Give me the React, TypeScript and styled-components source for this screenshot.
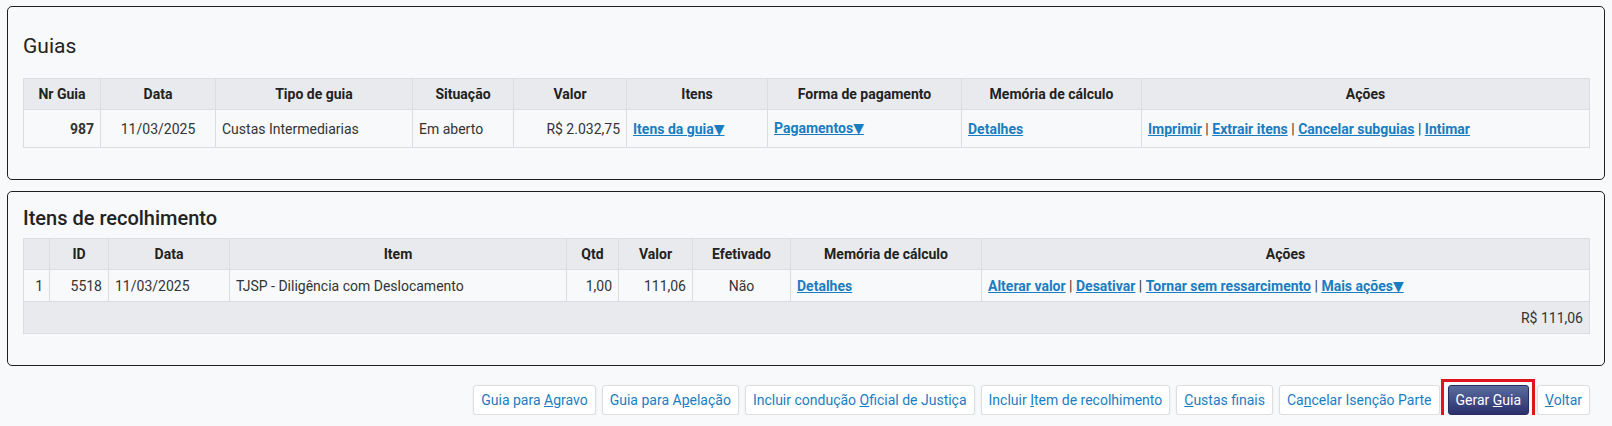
import React from "react";
import styled, { createGlobalStyle } from "styled-components";

const Global = createGlobalStyle`
  html, body { margin: 0; padding: 0; background: #f8f9fa; }
  body {
    font-family: Roboto, "Liberation Sans", sans-serif;
    font-size: 14px;
    color: #333;
  }
  * { box-sizing: border-box; }
`;

const Page = styled.div`
  display: flex;
  flex-direction: column;
  gap: 11px;
  padding: 6px 7px 0 7px;
`;

const Panel = styled.section`
  border: 1px solid #1f1f1f;
  border-radius: 5px;
  background: #f8f9fa;
  padding: 15px 15px 31px;
`;

const Title = styled.h2<{ $size: number; $weight: number; $mt: number; $mb: number }>`
  margin: ${(p) => p.$mt}px 0 ${(p) => p.$mb}px;
  font-size: ${(p) => p.$size}px;
  line-height: ${(p) => p.$size + 4}px;
  font-weight: ${(p) => p.$weight};
  color: #222;
`;

const Table = styled.table`
  width: 100%;
  border-collapse: collapse;
  table-layout: fixed;
  font-size: 14px;
`;

const Col = styled.col<{ $w: number }>`
  width: ${(p) => p.$w}px;
`;

const HeadRow = styled.tr`
  height: 31px;
  background: #e9eaed;
`;

const Th = styled.th`
  border: 1px solid #dadde1;
  padding: 0 6px;
  font-weight: 700;
  color: #222;
  text-align: center;
  white-space: nowrap;
`;

const Row = styled.tr<{ $h: number; $shade?: boolean }>`
  height: ${(p) => p.$h}px;
  background: ${(p) => (p.$shade ? "#e9eaed" : "#f8f9fa")};
`;

const Td = styled.td<{ $align?: "left" | "right" | "center"; $bold?: boolean }>`
  border: 1px solid #dadde1;
  padding: 0 6px;
  text-align: ${(p) => p.$align || "left"};
  font-weight: ${(p) => (p.$bold ? 700 : 400)};
  color: #333;
  white-space: nowrap;
  vertical-align: middle;
`;

const Link = styled.a<{ $raise?: number }>`
  color: #1a7dc1;
  font-weight: 700;
  text-decoration: underline;
  cursor: pointer;
  vertical-align: ${(p) => (p.$raise ? `${p.$raise}px` : "baseline")};
`;

const Sep = styled.span`
  color: #333;
  font-weight: 400;
`;

const Caret = styled.span`
  font-family: "DejaVu Sans", sans-serif;
  font-size: 14px;
`;

const ButtonBar = styled.div`
  display: flex;
  justify-content: flex-end;
  gap: 6px;
  margin-top: 19px;
  padding-right: 22px;
`;

const Button = styled.button<{ $primary?: boolean; $highlight?: boolean }>`
  position: relative;
  height: 30px;
  padding: 0 7px;
  margin: 0 ${(p) => (p.$highlight ? 2 : 0)}px;
  font-family: Roboto, "Liberation Sans", sans-serif;
  font-size: 14px;
  line-height: 28px;
  border-radius: 3px;
  cursor: pointer;
  white-space: nowrap;
  border: 1px solid ${(p) => (p.$primary ? "#262c62" : "#dcdee2")};
  color: ${(p) => (p.$primary ? "#ffffff" : "#1a7dc1")};
  background: ${(p) =>
    p.$primary ? "linear-gradient(#5a6d9e, #2a2f6c)" : "#ffffff"};
  box-shadow: 0 1px 2px rgba(0, 0, 0, 0.08);

  &::after {
    content: "";
    display: ${(p) => (p.$highlight ? "block" : "none")};
    position: absolute;
    top: -7px;
    bottom: -5px;
    left: -8px;
    right: -7px;
    border: 3px solid #e0141f;
    pointer-events: none;
  }
`;

type LinkItem = { label: string; caret?: boolean };

const Links: React.FC<{ items: LinkItem[] }> = ({ items }) => (
  <>
    {items.map((it, i) => (
      <React.Fragment key={it.label}>
        {i > 0 && <Sep> | </Sep>}
        <Link>
          {it.label}
          {it.caret && <Caret>▼</Caret>}
        </Link>
      </React.Fragment>
    ))}
  </>
);

const Key: React.FC<{ text: string; k: number }> = ({ text, k }) => (
  <>
    {text.slice(0, k)}
    <u>{text[k]}</u>
    {text.slice(k + 1)}
  </>
);

export default function App() {
  return (
    <>
      <Global />
      <Page>
        <Panel>
          <Title $size={21} $weight={400} $mt={12} $mb={19}>
            Guias
          </Title>
          <Table>
            <colgroup>
              {[77, 115, 197, 101, 113, 141, 194, 180, 448].map((w, i) => (
                <Col key={i} $w={w} />
              ))}
            </colgroup>
            <thead>
              <HeadRow>
                <Th>Nr Guia</Th>
                <Th>Data</Th>
                <Th>Tipo de guia</Th>
                <Th>Situação</Th>
                <Th>Valor</Th>
                <Th>Itens</Th>
                <Th>Forma de pagamento</Th>
                <Th>Memória de cálculo</Th>
                <Th>Ações</Th>
              </HeadRow>
            </thead>
            <tbody>
              <Row $h={38}>
                <Td $align="right" $bold>987</Td>
                <Td $align="center">11/03/2025</Td>
                <Td>Custas Intermediarias</Td>
                <Td>Em aberto</Td>
                <Td $align="right">R$ 2.032,75</Td>
                <Td>
                  <Link>
                    Itens da guia<Caret>▼</Caret>
                  </Link>
                </Td>
                <Td>
                  <Link $raise={2}>
                    Pagamentos<Caret>▼</Caret>
                  </Link>
                </Td>
                <Td>
                  <Link>Detalhes</Link>
                </Td>
                <Td>
                  <Links
                    items={[
                      { label: "Imprimir" },
                      { label: "Extrair itens" },
                      { label: "Cancelar subguias" },
                      { label: "Intimar" },
                    ]}
                  />
                </Td>
              </Row>
            </tbody>
          </Table>
        </Panel>

        <Panel>
          <Title $size={20} $weight={500} $mt={-1} $mb={8}>
            Itens de recolhimento
          </Title>
          <Table>
            <colgroup>
              {[26, 59, 121, 337, 52, 74, 98, 191, 608].map((w, i) => (
                <Col key={i} $w={w} />
              ))}
            </colgroup>
            <thead>
              <HeadRow>
                <Th></Th>
                <Th>ID</Th>
                <Th>Data</Th>
                <Th>Item</Th>
                <Th>Qtd</Th>
                <Th>Valor</Th>
                <Th>Efetivado</Th>
                <Th>Memória de cálculo</Th>
                <Th>Ações</Th>
              </HeadRow>
            </thead>
            <tbody>
              <Row $h={32}>
                <Td $align="right">1</Td>
                <Td $align="right">5518</Td>
                <Td>11/03/2025</Td>
                <Td>TJSP - Diligência com Deslocamento</Td>
                <Td $align="right">1,00</Td>
                <Td $align="right">111,06</Td>
                <Td $align="center">Não</Td>
                <Td>
                  <Link>Detalhes</Link>
                </Td>
                <Td>
                  <Links
                    items={[
                      { label: "Alterar valor" },
                      { label: "Desativar" },
                      { label: "Tornar sem ressarcimento" },
                      { label: "Mais ações", caret: true },
                    ]}
                  />
                </Td>
              </Row>
              <Row $h={32} $shade>
                <Td $align="right" colSpan={9}>
                  R$ 111,06
                </Td>
              </Row>
            </tbody>
          </Table>
        </Panel>
      </Page>

      <ButtonBar>
        <Button>
          <Key text="Guia para Agravo" k={10} />
        </Button>
        <Button>
          <Key text="Guia para Apelação" k={11} />
        </Button>
        <Button>
          <Key text="Incluir condução Oficial de Justiça" k={17} />
        </Button>
        <Button>
          <Key text="Incluir Item de recolhimento" k={8} />
        </Button>
        <Button>
          <Key text="Custas finais" k={0} />
        </Button>
        <Button>
          <Key text="Cancelar Isenção Parte" k={2} />
        </Button>
        <Button $primary $highlight>
          <Key text="Gerar Guia" k={6} />
        </Button>
        <Button>
          <Key text="Voltar" k={0} />
        </Button>
      </ButtonBar>
    </>
  );
}
